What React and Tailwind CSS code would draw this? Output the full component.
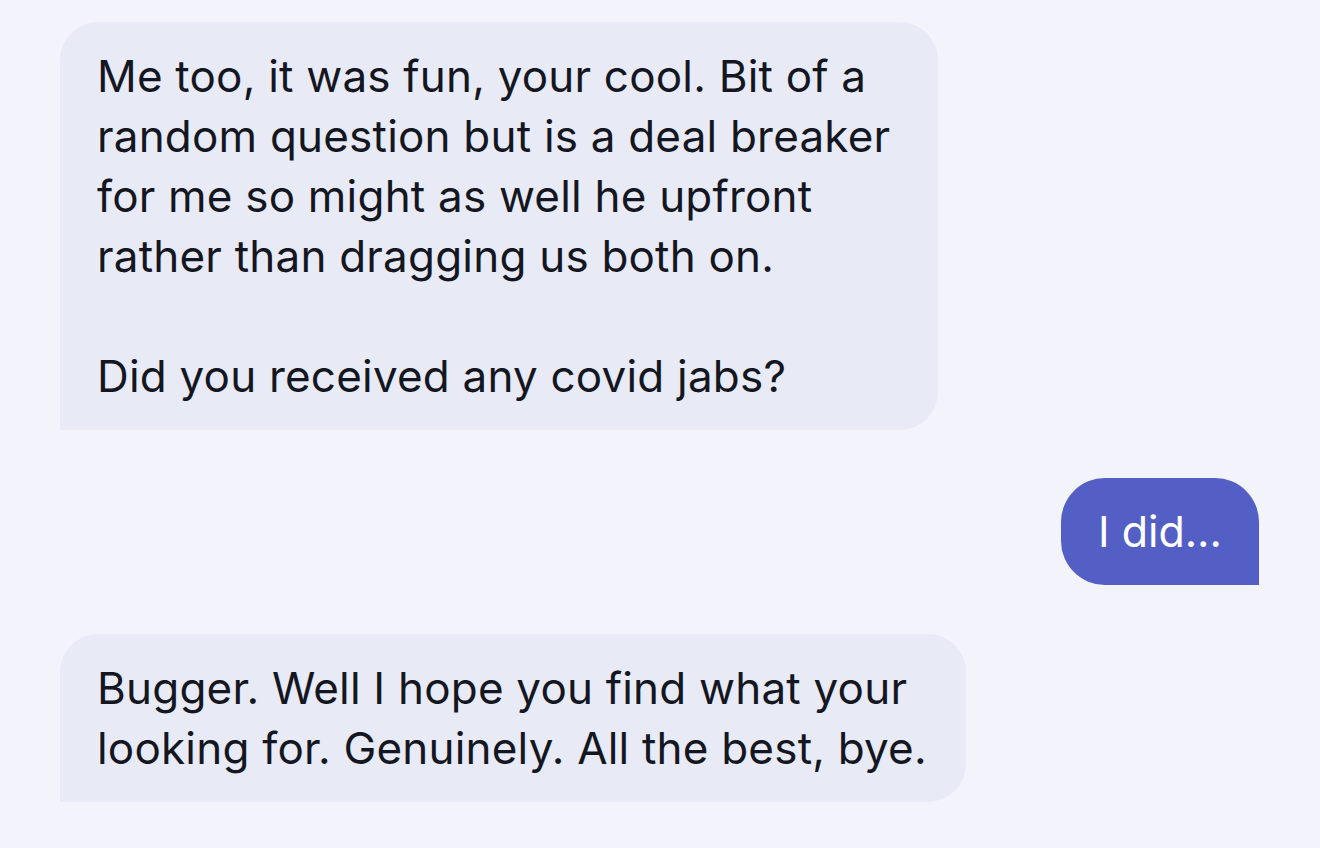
export default function App() {
  return (
    <div className="w-[1320px] h-[848px] bg-[#f2f3fb] overflow-hidden text-[#141722]" style={{ fontFamily: 'Inter, "Liberation Sans", Arial, sans-serif' }}>
      <div className="flex flex-col pt-[22px] pl-[60px] pr-[61px]">
        <div className="self-start w-[878px] bg-[#e8ebf5] rounded-tl-[38px] rounded-tr-[38px] rounded-br-[38px] px-[37px] py-[24px] text-[44px] tracking-[0.2px] leading-[60px] whitespace-pre-line">
          {"Me too, it was fun, your cool. Bit of a\nrandom question but is a deal breaker\nfor me so might as well he upfront\nrather than dragging us both on.\n\nDid you received any covid jabs?"}
        </div>
        <div className="self-end mt-[48px] w-[198px] bg-[#535fc5] text-white rounded-tl-[44px] rounded-tr-[44px] rounded-bl-[44px] px-[37px] py-[24px] text-[43px] leading-[59px] whitespace-nowrap">
          I did...
        </div>
        <div className="self-start mt-[49px] w-[906px] bg-[#e8ebf5] rounded-tl-[38px] rounded-tr-[38px] rounded-br-[38px] px-[37px] py-[24px] text-[44px] tracking-[0.2px] leading-[60px] whitespace-pre-line">
          {"Bugger. Well I hope you find what your\nlooking for. Genuinely. All the best, bye."}
        </div>
      </div>
    </div>
  );
}
